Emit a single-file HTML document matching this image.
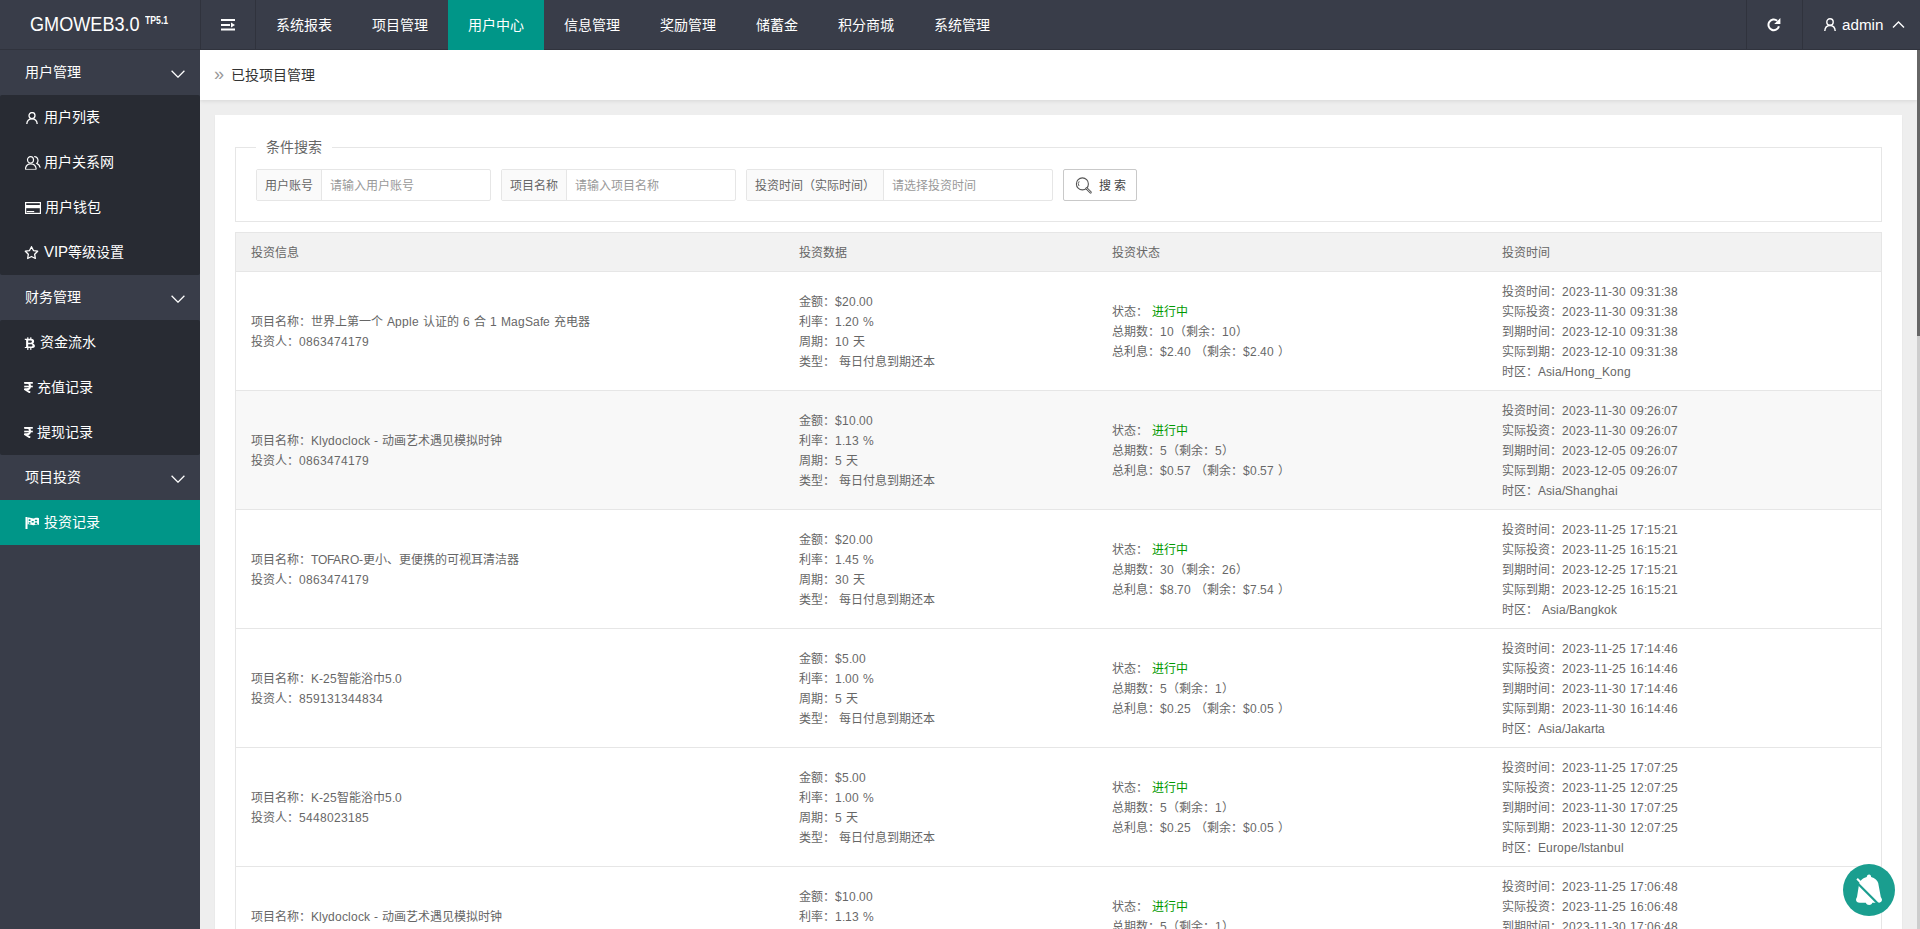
<!DOCTYPE html>
<html lang="zh-CN"><head><meta charset="utf-8"><title>GMOWEB3.0</title>
<style>
@font-face{font-family:"LSA";src:local("Liberation Sans");size-adjust:104%;unicode-range:U+0000-00FF}
*{margin:0;padding:0;box-sizing:border-box}
html,body{width:1920px;height:929px;overflow:hidden}
body{font-family:"LSA","Liberation Sans",sans-serif;font-size:12px;color:#666;background:#eee;position:relative}
.hdr{position:absolute;left:0;top:0;width:1920px;height:50px;background:#393D49}
.hdr .line{position:absolute;left:0;top:49px;width:1920px;height:1px;background:#30333d}
.logo{position:absolute;left:30px;top:14px;color:#fff;font-size:20px;line-height:20px;white-space:nowrap;font-family:"Liberation Sans",sans-serif;transform:scaleX(0.905);transform-origin:0 0}
.logo2{position:absolute;left:145px;top:16px;color:#fff;font-size:10px;line-height:10px;font-weight:bold;white-space:nowrap;font-family:"Liberation Sans",sans-serif;transform:scaleX(0.87);transform-origin:0 0}
.sep{position:absolute;top:0;width:1px;height:49px;background:#30333d}
.nav{position:absolute;top:0;height:50px;line-height:50px;color:#fff;font-size:14px;white-space:nowrap;padding:0 20px}
.nav.on{background:#009688}
.side{position:absolute;left:0;top:50px;width:200px;height:879px;background:#393D49}
.grp{position:absolute;left:0;width:200px;height:45px;line-height:45px;color:#fff;font-size:14px;padding-left:25px}
.chev{position:absolute;left:171px;top:19.5px}
.kids{position:absolute;left:0;width:200px;background:#282B33;border-radius:2px}
.kid{position:absolute;left:0;width:200px;height:45px;line-height:45px;color:#fff;font-size:14px;white-space:nowrap}
.kid svg{position:absolute}
.kid span{position:absolute;top:0}
.kid.on{background:#009688}
.main{position:absolute;left:200px;top:50px;width:1717px;height:879px;background:#eee;overflow:hidden}
.crumb{position:absolute;left:0;top:0;width:1717px;height:50px;background:#fff;box-shadow:0 1px 4px rgba(0,0,0,.1)}
.crumb .t{position:absolute;left:31px;top:16px;font-size:14px;color:#333;line-height:18px;white-space:nowrap}
.crumb .rq{position:absolute;left:14px;top:14px;color:#999;font-size:18px;line-height:20px;font-family:"Liberation Sans",sans-serif}
.card{position:absolute;left:15px;top:65px;width:1687px;height:900px;background:#fff;box-shadow:0 1px 2px rgba(0,0,0,.05)}
.fs{position:absolute;left:20px;top:32px;width:1647px;height:75px;border:1px solid #e6e6e6}
.legend{position:absolute;left:20px;top:-11px;padding:0 10px;background:#fff;font-size:14px;line-height:20px;color:#666;white-space:nowrap}
.ig{position:absolute;top:21px;height:32px;border:1px solid #e6e6e6;border-radius:2px;background:#fff}
.ig .lb{position:absolute;left:0;top:0;height:30px;line-height:32px;background:#fafafa;border-right:1px solid #e6e6e6;padding:0 8px;color:#666;white-space:nowrap}
.ig .ph{position:absolute;top:0;line-height:32px;color:#999;white-space:nowrap}
.btn{position:absolute;top:21px;left:827px;width:74px;height:32px;border:1px solid #c9c9c9;border-radius:2px;background:#fff;color:#555}
.tbl{position:absolute;left:20px;top:117px;width:1647px;border:1px solid #e6e6e6;border-bottom:0}
.th{position:relative;height:39px;background:#f2f2f2;border-bottom:1px solid #e6e6e6}
.row{position:relative;height:119px;border-bottom:1px solid #e6e6e6;background:#fff}
.row.hv{background:#f8f8f8}
.c{position:absolute;top:0;line-height:20px;white-space:nowrap;word-spacing:1px}
.g{color:#009900}
</style></head>
<body>
<div class="hdr">
  <div class="line"></div>
  <div class="logo">GMOWEB3.0</div><div class="logo2">TP5.1</div>
  <div class="sep" style="left:200px"></div>
  <div class="sep" style="left:255px"></div>
  <svg style="position:absolute;left:221px;top:19px" width="15" height="12" viewBox="0 0 15 12"><rect x="0" y="0" width="14" height="2" fill="#fff"/><rect x="0" y="5" width="9" height="2" fill="#fff"/><rect x="0" y="9.5" width="14" height="2" fill="#fff"/><path d="M10 3.5 L14 6 L10 8.5Z" fill="#fff"/></svg>
  <div class="nav" style="left:256px">系统报表</div>
  <div class="nav" style="left:352px">项目管理</div>
  <div class="nav on" style="left:448px">用户中心</div>
  <div class="nav" style="left:544px">信息管理</div>
  <div class="nav" style="left:640px">奖励管理</div>
  <div class="nav" style="left:736px">储蓄金</div>
  <div class="nav" style="left:818px">积分商城</div>
  <div class="nav" style="left:914px">系统管理</div>
  <div class="sep" style="left:1746px"></div>
  <div class="sep" style="left:1802px"></div>
  <svg style="position:absolute;left:1767px;top:18px" width="15" height="15" viewBox="0 0 15 15"><path d="M10.2 2.8 A5.3 5.3 0 1 0 11.9 8.2" fill="none" stroke="#fff" stroke-width="2"/><path d="M7.2 5.9 L13.4 0.1 L13.4 5.9 Z" fill="#fff"/></svg>
  <svg style="position:absolute;left:1824px;top:18px" width="12" height="13" viewBox="0 0 12 13"><circle cx="6" cy="4" r="3.2" fill="none" stroke="#fff" stroke-width="1.4"/><path d="M0.8 13 C1 9.5 3 7.5 6 7.5 C9 7.5 11 9.5 11.2 13" fill="none" stroke="#fff" stroke-width="1.4"/></svg>
  <div style="position:absolute;left:1842px;top:15px;line-height:20px;font-size:15.2px;color:#fff;font-family:'Liberation Sans',sans-serif">admin</div>
  <svg style="position:absolute;left:1892px;top:20px" width="13" height="9" viewBox="0 0 13 9"><path d="M1 7.5 L6.5 2 L12 7.5" fill="none" stroke="#fff" stroke-width="1.4"/></svg>
</div>

<div class="side">
  <div class="grp" style="top:0">用户管理<svg class="chev" width="14" height="8" viewBox="0 0 14 8"><path d="M0.6 0.8 L7 7.2 L13.4 0.8" fill="none" stroke="#fff" stroke-width="1.25"/></svg></div>
  <div class="kids" style="top:45px;height:180px"></div>
  <div class="kid" style="top:45px"><svg style="left:26px;top:17px" width="12" height="12" viewBox="0 0 12 12"><circle cx="6" cy="3.6" r="3" fill="none" stroke="#fff" stroke-width="1.3"/><path d="M0.8 12 C1 8.6 3 6.8 6 6.8 C9 6.8 11 8.6 11.2 12" fill="none" stroke="#fff" stroke-width="1.3"/></svg><span style="left:44px">用户列表</span></div>
  <div class="kid" style="top:90px"><svg style="left:25px;top:16px" width="17" height="15" viewBox="0 0 17 15"><ellipse cx="5.5" cy="3.8" rx="3" ry="3.2" fill="none" stroke="#fff" stroke-width="1.2"/><path d="M0.4 13.4 C0.6 10 2.8 7.8 5.8 7.8 C8.8 7.8 11 10 11.2 13.4" fill="none" stroke="#fff" stroke-width="1.2"/><path d="M0.4 13.4 H11.2" stroke="#c8c8c8" stroke-width="1"/><path d="M9.2 0.5 C11.6 0.9 13 2.6 13 4.6 C13 5.8 12.5 6.8 11.8 7.4 C13.6 8.2 14.8 9.8 15.2 11.6" fill="none" stroke="#fff" stroke-width="1.2"/></svg><span style="left:44px">用户关系网</span></div>
  <div class="kid" style="top:135px"><svg style="left:24.5px;top:17px" width="16" height="12" viewBox="0 0 16 12"><rect x="0.6" y="0.6" width="14.8" height="10.8" fill="none" stroke="#fff" stroke-width="1.2"/><rect x="0" y="3" width="16" height="3.2" fill="#fff"/><rect x="1.7" y="9" width="7.5" height="1.1" fill="#fff"/></svg><span style="left:45px">用户钱包</span></div>
  <div class="kid" style="top:180px"><svg style="left:24px;top:15px" width="15" height="16" viewBox="0 0 15 16"><path d="M7.50 1.70 L9.44 5.53 L13.68 6.19 L10.64 9.22 L11.32 13.46 L7.50 11.50 L3.68 13.46 L4.36 9.22 L1.32 6.19 L5.56 5.53 Z" fill="none" stroke="#fff" stroke-width="1.3" stroke-linejoin="round"/></svg><span style="left:44px">VIP等级设置</span></div>
  <div class="grp" style="top:225px">财务管理<svg class="chev" width="14" height="8" viewBox="0 0 14 8"><path d="M0.6 0.8 L7 7.2 L13.4 0.8" fill="none" stroke="#fff" stroke-width="1.25"/></svg></div>
  <div class="kids" style="top:270px;height:135px"></div>
  <div class="kid" style="top:270px"><svg style="left:24px;top:17px" width="12" height="14" viewBox="0 0 12 14"><path d="M0.8 1.8 H7 C9.2 1.8 10.1 3 10.1 4.4 C10.1 5.4 9.5 6.1 8.7 6.4 C10 6.7 10.9 7.6 10.9 8.9 C10.9 10.2 9.9 11.1 7.5 11.1 H0.8 V9.9 H2.1 V3 H0.8 Z M4.2 3.4 V5.7 H6.7 C7.5 5.7 7.9 5.3 7.9 4.6 C7.9 3.8 7.5 3.4 6.7 3.4 Z M4.2 7.2 V9.5 H7 C8 9.5 8.5 9.1 8.5 8.3 C8.5 7.6 8 7.2 7 7.2 Z" fill="#fff" fill-rule="evenodd"/><rect x="3.2" y="0.3" width="1.2" height="1.8" fill="#fff"/><rect x="6.2" y="0.3" width="1.2" height="1.8" fill="#fff"/><rect x="3.2" y="10.9" width="1.2" height="2" fill="#fff"/><rect x="6.2" y="10.9" width="1.2" height="2" fill="#fff"/></svg><span style="left:40px">资金流水</span></div>
  <div class="kid" style="top:315px"><svg style="left:24px;top:17px" width="9" height="11" viewBox="0 0 9 11"><rect x="0.2" y="0" width="8.6" height="1.7" fill="#fff"/><rect x="0.2" y="3.7" width="8.6" height="1.6" fill="#fff"/><path d="M0.6 0.9 H3.2 C5 0.9 6 2.3 6 4.3 C6 6.2 4.8 7.3 3 7.3 H0.8 L6.2 10.6" fill="none" stroke="#fff" stroke-width="1.9" stroke-linejoin="round"/></svg><span style="left:37px">充值记录</span></div>
  <div class="kid" style="top:360px"><svg style="left:24px;top:17px" width="9" height="11" viewBox="0 0 9 11"><rect x="0.2" y="0" width="8.6" height="1.7" fill="#fff"/><rect x="0.2" y="3.7" width="8.6" height="1.6" fill="#fff"/><path d="M0.6 0.9 H3.2 C5 0.9 6 2.3 6 4.3 C6 6.2 4.8 7.3 3 7.3 H0.8 L6.2 10.6" fill="none" stroke="#fff" stroke-width="1.9" stroke-linejoin="round"/></svg><span style="left:37px">提现记录</span></div>
  <div class="grp" style="top:405px">项目投资<svg class="chev" width="14" height="8" viewBox="0 0 14 8"><path d="M0.6 0.8 L7 7.2 L13.4 0.8" fill="none" stroke="#fff" stroke-width="1.25"/></svg></div>
  <div class="kid on" style="top:450px"><svg style="left:25px;top:16px" width="15" height="14" viewBox="0 0 15 14"><rect x="0.5" y="1" width="2" height="12" fill="#fff"/><path d="M2.5 1.8 C5 0.8 7 3 9.5 2.2 C11 1.7 12.5 1.6 14 2.2 V9 C12.5 8.4 11 8.5 9.5 9 C7 9.8 5 7.6 2.5 8.6 Z" fill="#fff"/><g fill="#009688"><rect x="3.6" y="3.3" width="2" height="1.6" rx="0.6"/><rect x="9.8" y="3.8" width="2.4" height="1.4" rx="0.6"/><rect x="6.6" y="4.9" width="2.2" height="1.6" rx="0.6"/><rect x="3.6" y="6.3" width="2" height="1.4" rx="0.6"/><rect x="9.8" y="6.5" width="2.4" height="1.5" rx="0.6"/></g></svg><span style="left:44px">投资记录</span></div>
</div>

<div class="main">
  <div class="crumb"><span class="rq">»</span><span class="t">已投项目管理</span></div>
  <div class="card">
    <div class="fs">
      <div class="legend">条件搜索</div>
      <div class="ig" style="left:20px;width:235px"><div class="lb" style="width:65px">用户账号</div><div class="ph" style="left:73px">请输入用户账号</div></div>
      <div class="ig" style="left:265px;width:235px"><div class="lb" style="width:65px">项目名称</div><div class="ph" style="left:73px">请输入项目名称</div></div>
      <div class="ig" style="left:510px;width:307px"><div class="lb" style="width:137px">投资时间（实际时间）</div><div class="ph" style="left:145px">请选择投资时间</div></div>
      <div class="btn" style="left:827px"><svg style="position:absolute;left:11px;top:7px" width="18" height="18" viewBox="0 0 18 18"><circle cx="7.4" cy="6.9" r="6" fill="none" stroke="#555" stroke-width="1.1"/><path d="M11.6 11.4 L15.6 15.4" stroke="#555" stroke-width="2.4" stroke-linecap="round"/><path d="M11.6 11.4 L15.6 15.4" stroke="#fff" stroke-width="0.8" stroke-linecap="round"/><path d="M4.2 4.3 A4 4 0 0 0 4 9" fill="none" stroke="#555" stroke-width="0.9"/></svg><span style="position:absolute;left:35px;top:0;line-height:32px;white-space:nowrap;color:#444">搜 索</span></div>
    </div>
    <div class="tbl">
<div class="th"><div class="c" style="left:15px;top:10px">投资信息</div><div class="c" style="left:563px;top:10px">投资数据</div><div class="c" style="left:876px;top:10px">投资状态</div><div class="c" style="left:1266px;top:10px">投资时间</div></div>
<div class="row"><div class="c" style="left:15px;top:40px">项目名称：世界上第一个 Apple 认证的 6 合 1 MagSafe 充电器<br>投资人：0863474179</div><div class="c" style="left:563px;top:20px">金额：$20.00<br>利率：1.20 %<br>周期：10 天<br>类型： 每日付息到期还本</div><div class="c" style="left:876px;top:30px">状态： <span class=g>进行中</span><br>总期数：10（剩余：10）<br>总利息：$2.40 （剩余：$2.40 ）</div><div class="c" style="left:1266px;top:10px">投资时间：2023-11-30 09:31:38<br>实际投资：2023-11-30 09:31:38<br>到期时间：2023-12-10 09:31:38<br>实际到期：2023-12-10 09:31:38<br>时区：Asia/Hong_Kong</div></div>
<div class="row hv"><div class="c" style="left:15px;top:40px">项目名称：Klydoclock - 动画艺术遇见模拟时钟<br>投资人：0863474179</div><div class="c" style="left:563px;top:20px">金额：$10.00<br>利率：1.13 %<br>周期：5 天<br>类型： 每日付息到期还本</div><div class="c" style="left:876px;top:30px">状态： <span class=g>进行中</span><br>总期数：5（剩余：5）<br>总利息：$0.57 （剩余：$0.57 ）</div><div class="c" style="left:1266px;top:10px">投资时间：2023-11-30 09:26:07<br>实际投资：2023-11-30 09:26:07<br>到期时间：2023-12-05 09:26:07<br>实际到期：2023-12-05 09:26:07<br>时区：Asia/Shanghai</div></div>
<div class="row"><div class="c" style="left:15px;top:40px">项目名称：TOFARO-更小、更便携的可视耳清洁器<br>投资人：0863474179</div><div class="c" style="left:563px;top:20px">金额：$20.00<br>利率：1.45 %<br>周期：30 天<br>类型： 每日付息到期还本</div><div class="c" style="left:876px;top:30px">状态： <span class=g>进行中</span><br>总期数：30（剩余：26）<br>总利息：$8.70 （剩余：$7.54 ）</div><div class="c" style="left:1266px;top:10px">投资时间：2023-11-25 17:15:21<br>实际投资：2023-11-25 16:15:21<br>到期时间：2023-12-25 17:15:21<br>实际到期：2023-12-25 16:15:21<br>时区： Asia/Bangkok</div></div>
<div class="row"><div class="c" style="left:15px;top:40px">项目名称：K-25智能浴巾5.0<br>投资人：859131344834</div><div class="c" style="left:563px;top:20px">金额：$5.00<br>利率：1.00 %<br>周期：5 天<br>类型： 每日付息到期还本</div><div class="c" style="left:876px;top:30px">状态： <span class=g>进行中</span><br>总期数：5（剩余：1）<br>总利息：$0.25 （剩余：$0.05 ）</div><div class="c" style="left:1266px;top:10px">投资时间：2023-11-25 17:14:46<br>实际投资：2023-11-25 16:14:46<br>到期时间：2023-11-30 17:14:46<br>实际到期：2023-11-30 16:14:46<br>时区：Asia/Jakarta</div></div>
<div class="row"><div class="c" style="left:15px;top:40px">项目名称：K-25智能浴巾5.0<br>投资人：5448023185</div><div class="c" style="left:563px;top:20px">金额：$5.00<br>利率：1.00 %<br>周期：5 天<br>类型： 每日付息到期还本</div><div class="c" style="left:876px;top:30px">状态： <span class=g>进行中</span><br>总期数：5（剩余：1）<br>总利息：$0.25 （剩余：$0.05 ）</div><div class="c" style="left:1266px;top:10px">投资时间：2023-11-25 17:07:25<br>实际投资：2023-11-25 12:07:25<br>到期时间：2023-11-30 17:07:25<br>实际到期：2023-11-30 12:07:25<br>时区：Europe/Istanbul</div></div>
<div class="row"><div class="c" style="left:15px;top:40px">项目名称：Klydoclock - 动画艺术遇见模拟时钟<br>投资人：0863474179</div><div class="c" style="left:563px;top:20px">金额：$10.00<br>利率：1.13 %<br>周期：5 天<br>类型： 每日付息到期还本</div><div class="c" style="left:876px;top:30px">状态： <span class=g>进行中</span><br>总期数：5（剩余：1）<br>总利息：$0.25 （剩余：$0.05 ）</div><div class="c" style="left:1266px;top:10px">投资时间：2023-11-25 17:06:48<br>实际投资：2023-11-25 16:06:48<br>到期时间：2023-11-30 17:06:48<br>实际到期：2023-11-30 16:06:48<br>时区：Asia/Hong_Kong</div></div>
</div><!--tblend-->
  </div>
</div>
<div style="position:absolute;left:1917px;top:50px;width:3px;height:879px;background:#cdcdcd"></div>
<div style="position:absolute;left:1917px;top:50px;width:3px;height:286px;background:#666"></div>
<div style="position:absolute;left:1843px;top:864px;width:52px;height:52px;border-radius:50%;background:#1a9e8f">
<svg style="position:absolute;left:7px;top:6px" width="40" height="40" viewBox="0 0 40 40"><path d="M19.1 4.5 C20.4 4.5 21.1 5.5 21.1 6.9 C25 8 27.6 10.5 28.2 13 L30.8 27 C31.4 28 32 29 32 29.8 C32 31.8 30.5 32.8 28 32.8 H22.4 C21.8 34.2 20.5 35 19.1 35 C17.7 35 16.4 34.2 15.8 32.8 H9.8 C7.5 32.8 6 31.8 6 29.8 C6 29 6.4 28 7 27 L9 14.5 C9.5 10.5 13 8 16.8 6.9 C16.8 5.5 17.7 4.5 19.1 4.5 Z" fill="#fff"/><path d="M5.3 11 L28 33.7" stroke="#1a9e8f" stroke-width="2.2"/><path d="M7.1 8.7 L30.1 31.7" stroke="#fff" stroke-width="2"/></svg>
</div>
</body></html>
